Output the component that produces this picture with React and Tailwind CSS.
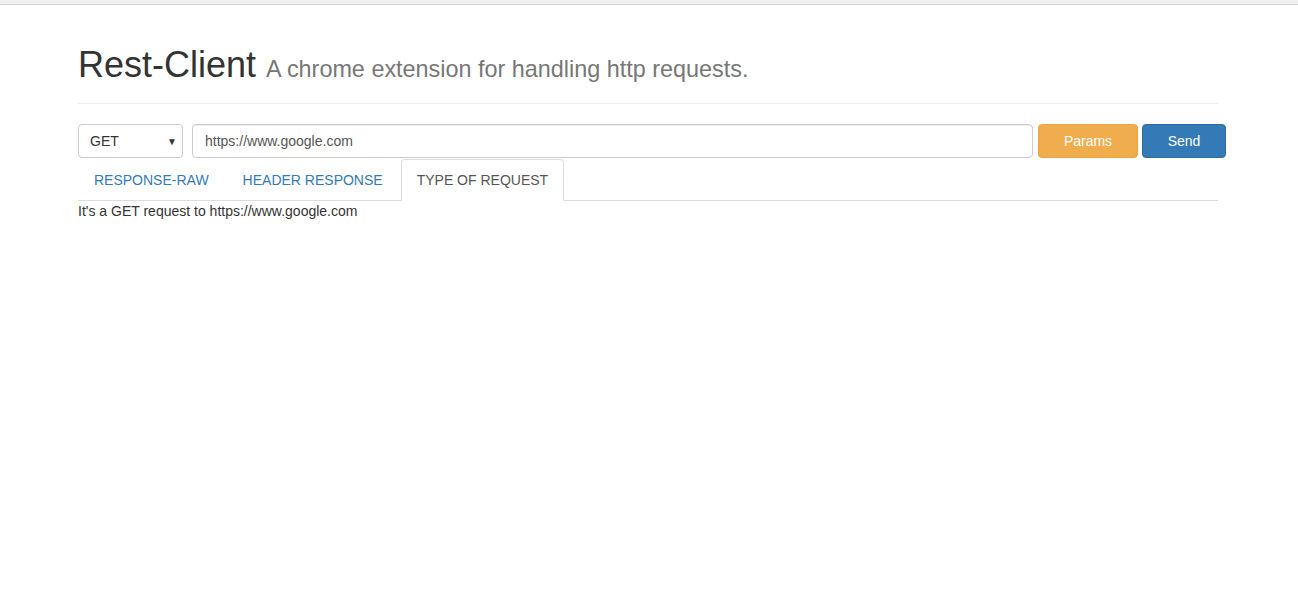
const tabs = ["RESPONSE-RAW", "HEADER RESPONSE", "TYPE OF REQUEST"];

const App = () => {
  const active = 2;
  const url = "https://www.google.com";

  return (
    <div className="min-h-screen bg-white text-[14px] text-[#333] font-['Liberation_Sans',Arial,sans-serif]">
      {/* Top strip */}
      <div className="h-[5px] bg-[#f0f0f0] border-b border-[#d4d4d4]" />

      <div className="w-[1172px] mx-auto px-[15px]">
        {/* Page header */}
        <h1 className="mt-[40px] pb-[18px] w-[1140px] border-b border-[#eee] text-[36px] leading-[40px] font-normal text-[#333]">
          Rest-Client{" "}
          <small className="text-[23.4px] leading-none text-[#777]">
            A chrome extension for handling http requests.
          </small>
        </h1>

        {/* Request bar */}
        <div className="mt-[20px] w-[1148px] h-[34px] flex items-stretch">
          <div className="w-[105px] flex items-center justify-between pl-[11px] pr-[5px] border border-[#ccc] rounded-[4px] bg-white text-[#333]">
            <span>GET</span>
            <span className="text-[10px] text-[#333]">▼</span>
          </div>
          <div className="ml-[9px] flex-1 flex items-center px-[12px] border border-[#ccc] rounded-[4px] text-[#555] shadow-[inset_0_1px_1px_rgba(0,0,0,0.075)]">
            {url}
          </div>
          <button className="ml-[5px] w-[100px] rounded-[4px] border border-[#eea236] bg-[#f0ad4e] text-white">
            Params
          </button>
          <button className="ml-[4px] w-[84px] rounded-[4px] border border-[#2e6da4] bg-[#337ab7] text-white">
            Send
          </button>
        </div>

        {/* Tabs */}
        <ul className="mt-px flex w-[1140px] border-b border-[#ddd]">
          {tabs.map((t, i) => (
            <li key={t} className="mr-[2px] -mb-px">
              <a
                className={
                  i === active
                    ? "block px-[15px] py-[10px] leading-[20px] border border-[#ddd] border-b-white rounded-t-[4px] bg-white text-[#555]"
                    : "block px-[15px] py-[10px] leading-[20px] border border-transparent text-[#337ab7]"
                }
              >
                {t}
              </a>
            </li>
          ))}
        </ul>

        <div className="leading-[20px]">It's a GET request to {url}</div>
      </div>
    </div>
  );
};

export default App;
